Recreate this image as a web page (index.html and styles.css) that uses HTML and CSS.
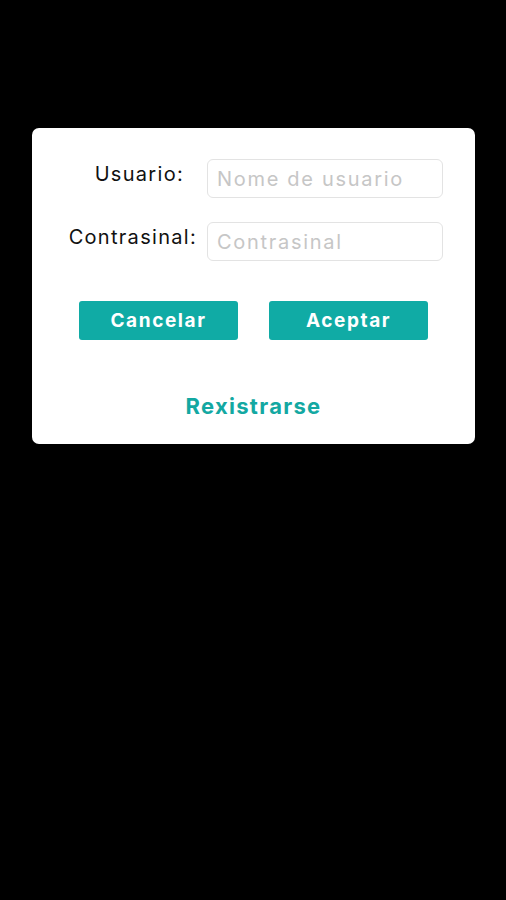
FILE: index.html
```html
<!DOCTYPE html>
<html lang="gl">
<head>
<meta charset="utf-8">
<title>Login</title>
<link rel="stylesheet" href="styles.css">
</head>
<body>
<div class="card">
  <div class="form">
    <label class="label label-user" for="u">Usuario:</label>
    <input class="field" id="u" type="text" placeholder="Nome de usuario">
    <label class="label" for="p">Contrasinal:</label>
    <input class="field" id="p" type="password" placeholder="Contrasinal">
  </div>
  <div class="actions">
    <button class="btn">Cancelar</button>
    <button class="btn">Aceptar</button>
  </div>
  <a class="register" href="#">Rexistrarse</a>
</div>
</body>
</html>
```
FILE: styles.css
```css
html, body {
  margin: 0;
  padding: 0;
  background: #000;
  height: 100%;
}
body {
  font-family: Inter, "Noto Sans", sans-serif;
}
.card {
  box-sizing: border-box;
  margin: 128px 0 0 32px;
  width: 443px;
  height: 316px;
  background: #fff;
  border-radius: 7px;
  padding: 31px 32px 0 0;
  display: flex;
  flex-direction: column;
}
.form {
  display: grid;
  grid-template-columns: 175px 236px;
  row-gap: 24px;
}
.label {
  font-size: 20px;
  line-height: 30px;
  color: #111;
  text-align: right;
  padding-right: 10px;
  letter-spacing: 1.3px;
}
.label-user {
  padding-right: 23px;
}
.field {
  box-sizing: border-box;
  width: 236px;
  height: 39px;
  border: 1px solid #e3e3e3;
  border-radius: 6px;
  padding: 0 9px;
  font-family: inherit;
  font-size: 20px;
  letter-spacing: 1.7px;
  color: #333;
  outline: none;
  background: #fff;
}
.field::placeholder {
  color: #c6c6c6;
}
.actions {
  display: flex;
  gap: 31px;
  margin: 40px 0 0 47px;
}
.btn {
  width: 159px;
  height: 39px;
  border: none;
  border-radius: 3px;
  background: #10aba5;
  color: #fff;
  font-family: inherit;
  font-weight: 700;
  font-size: 19px;
  letter-spacing: 1.6px;
  cursor: pointer;
}
.register {
  align-self: center;
  margin: 53px 0 0 32px;
  color: #13a8a2;
  font-weight: 700;
  font-size: 22px;
  text-decoration: none;
  letter-spacing: 1.3px;
}
```
